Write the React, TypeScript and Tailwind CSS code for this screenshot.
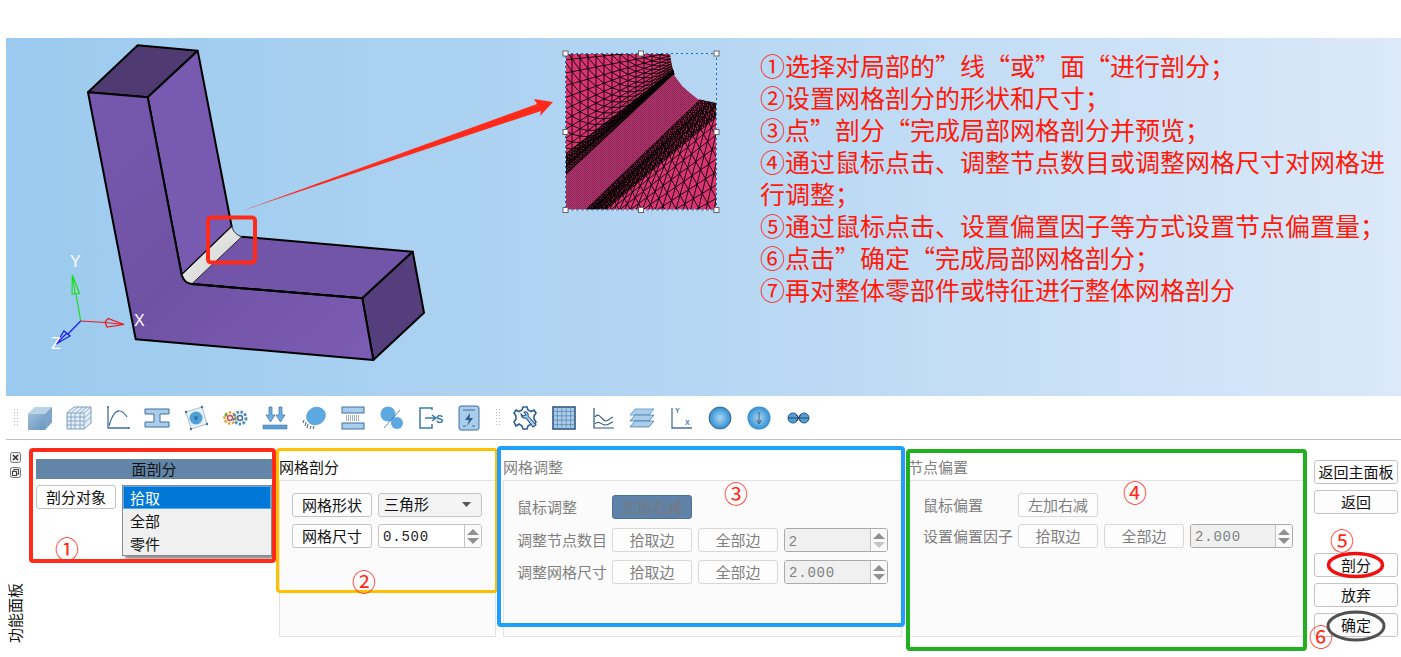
import React from "react";

const CJK = "font-['Noto_Sans_CJK_SC','Noto_Sans',sans-serif]";

type Pt = [number, number];
const lerp = (a: Pt, b: Pt, t: number): Pt => [a[0] + (b[0] - a[0]) * t, a[1] + (b[1] - a[1]) * t];

function meshPath(eA: Pt, eB: Pt, fA: Pt, fB: Pt, nS: number, nT: number, pow: number, t0 = 0, t1 = 1) {
  const P = (i: number, j: number) => {
    const s = i / nS;
    const t = t0 + (t1 - t0) * Math.pow(j / nT, pow);
    return lerp(lerp(eA, eB, s), lerp(fA, fB, s), t);
  };
  const f = (p: Pt) => `${p[0].toFixed(1)} ${p[1].toFixed(1)}`;
  let d = "";
  for (let j = 0; j <= nT; j++) {
    for (let i = 0; i < nS; i++) {
      d += `M${f(P(i, j))}L${f(P(i + 1, j))}`;
      if (j < nT) {
        d += `M${f(P(i, j))}L${f(P(i, j + 1))}`;
        d += `M${f(P(i + 1, j))}L${f(P(i, j + 1))}`;
      }
    }
  }
  return d;
}

const topMesh =
  meshPath([556, 184], [684, 65], [556, 46], [684, 46], 16, 13, 1.5, 0.06, 1) +
  meshPath([556, 184], [684, 65], [556, 46], [684, 46], 48, 7, 1.2, 0, 0.16);
const botMesh =
  meshPath([570, 224], [712, 88], [606, 292], [790, 226], 19, 14, 1.5, 0.05, 1) +
  meshPath([570, 224], [712, 88], [606, 292], [790, 226], 57, 7, 1.2, 0, 0.16);

function Handle({ x, y }: { x: number; y: number }) {
  return <rect x={x - 2.5} y={y - 2.5} width={5} height={5} fill="#fff" stroke="#666" strokeWidth={1} />;
}

function Scene() {
  const shape = "566,54 670,54 672,66 675,76 682,86 690,93 698,99 716,103 716,210 566,210";
  return (
    <svg viewBox="6 38 714 358" className="w-[714px] h-[358px] shrink-0 block">
      <defs>
        <linearGradient id="faceA" x1="0" y1="0" x2="1" y2="1">
          <stop offset="0" stopColor="#7659ae" />
          <stop offset="0.5" stopColor="#7052a4" />
          <stop offset="1" stopColor="#7c5cb4" />
        </linearGradient>
        <linearGradient id="fillet" x1="0" y1="0" x2="1" y2="1">
          <stop offset="0" stopColor="#f2f2f0" />
          <stop offset="1" stopColor="#cfcfcd" />
        </linearGradient>
        <pattern id="fine" width="2" height="2" patternUnits="userSpaceOnUse">
          <rect width="2" height="2" fill="#b2346c" />
          <rect width="1" height="1" fill="#7e2550" />
          <rect x="1" y="1" width="1" height="1" fill="#982c5e" />
        </pattern>
        <clipPath id="meshClip">
          <polygon points={shape} />
        </clipPath>
      </defs>
      <g stroke="#000" strokeWidth={2} strokeLinejoin="round">
        <polygon points="88,92.3 137.7,45.3 197.7,50.7 147.7,97.3" fill="#4f3a72" />
        <polygon points="147.7,97.3 197.7,50.7 231.7,226.7 181.7,275" fill="#785ab0" />
        <polygon points="241.7,236.7 412.7,251.7 362.3,298.3 191.7,284" fill="#7254a8" stroke="none" />
        <path d="M241.7 236.7L412.7 251.7L362.3 298.3L191.7 284" fill="none" />
        <polygon points="412.7,251.7 424,312.7 373.3,360 362.3,298.3" fill="#553e7c" />
        <polygon points="88,92.3 147.7,97.3 181.7,275 191.7,284 362.3,298.3 373.3,360 135.7,339.3" fill="url(#faceA)" />
        <path d="M231.7 226.7C233 231 237 235.5 241.7 236.7L191.7 284C186 283.5 183 279 181.7 275Z" fill="url(#fillet)" strokeWidth={0.8} />
      </g>
      <path d="M181.7 275C183 279 186 283.5 191.7 284L362.3 298.3" fill="none" stroke="#000" strokeWidth={2} />
      <rect x={208} y={217.5} width={47} height={45} rx={3} fill="none" stroke="#ff2a1a" strokeWidth={4} />
      <polygon points="243,210.5 537,104 534,99 553,102 540,116 541,111" fill="#ff2a1a" />
      {/* axes */}
      <g fill="none" strokeWidth={1.2}>
        <path d="M80.7 321L76 294" stroke="#19e019" />
        <path d="M72.3 275L79.5 293.5L72 294ZM73 277L75 294" stroke="#19e019" />
        <path d="M80.7 321L105 322.5" stroke="#f01818" />
        <path d="M124 324.5L108 318.5L105 322L107 327ZM124 324.5L105 322.5" stroke="#f01818" />
        <path d="M80.7 321L68 334" stroke="#1818f0" />
        <path d="M56 344L64 331L70 336ZM56 344L67 333" stroke="#1818f0" />
      </g>
      <text x={70} y={267} fill="#fff" fontSize={16} fontFamily="Liberation Sans">Y</text>
      <text x={134} y={326} fill="#fff" fontSize={16} fontFamily="Liberation Sans">X</text>
      <text x={51} y={349} fill="#fff" fontSize={16} fontFamily="Liberation Sans">Z</text>
      {/* mesh picture */}
      <g clipPath="url(#meshClip)">
        <polygon points={shape} fill="#dc3473" />
        <path d={topMesh} stroke="#000" strokeWidth={0.9} fill="none" />
        <path d={botMesh} stroke="#000" strokeWidth={0.9} fill="none" />
        <polygon points="566,175 673,75 698,100 585,210 566,210" fill="url(#fine)" />
      </g>
      <rect x={565.5} y={53.5} width={151} height={156.5} fill="none" stroke="#fff" />
      <rect x={565.5} y={53.5} width={151} height={156.5} fill="none" stroke="#1678d0" strokeDasharray="3 2" />
      <Handle x={565.5} y={53.5} />
      <Handle x={641} y={53.5} />
      <Handle x={716.5} y={53.5} />
      <Handle x={565.5} y={132} />
      <Handle x={716.5} y={132} />
      <Handle x={565.5} y={210} />
      <Handle x={641} y={210} />
      <Handle x={716.5} y={210} />
    </svg>
  );
}

function Grip() {
  return (
    <svg width={4} height={18} viewBox="0 0 4 18" className="shrink-0">
      {[0, 3, 6, 9, 12, 15].map((y) => (
        <g key={y} fill="#b8b8b8">
          <rect x={0} y={y} width={1} height={1} />
          <rect x={3} y={y} width={1} height={1} />
        </g>
      ))}
    </svg>
  );
}

const B = "#3f6f9f";
const L = "#6fa8d8";

function Ico({ children }: { children: React.ReactNode }) {
  return (
    <svg width={26} height={26} viewBox="0 0 26 26" className="shrink-0" fill="none">
      {children}
    </svg>
  );
}

const icons: React.ReactNode[] = [
  <Ico key="1">
    <defs>
      <linearGradient id="cube" x1="0" y1="0" x2="1" y2="1">
        <stop offset="0" stopColor="#a9c8e2" />
        <stop offset="1" stopColor="#5f8db8" />
      </linearGradient>
    </defs>
    <path d="M1 9L8 2H25V17L18 25H1Z" fill="url(#cube)" />
    <path d="M18 9L25 2V17L18 25Z" fill="#7ea6ca" />
    <path d="M1 9L8 2H25L18 9Z" fill="#b8d2e8" />
  </Ico>,
  <Ico key="2">
    <path d="M1 8L8 2H25V18L18 24H1Z" fill="#e4eef6" stroke="#7a9cbc" />
    <path d="M1 12H18M1 16H18M1 20H18M5 8V24M9 8V24M14 8V24M18 8V24M1 8H18M18 8L25 2M18 13L25 7M18 18L25 12M5 8L12 2M10 8L17 2M14 8L21 2" stroke="#7a9cbc" strokeWidth={0.8} />
  </Ico>,
  <Ico key="3">
    <path d="M3 2V23H24" stroke={B} strokeWidth={1.3} />
    <path d="M4 21C7 10 11 5 15 6C18 6.5 20 9 22 12" stroke={B} strokeWidth={1.2} />
    <circle cx={24} cy={23} r={1} fill={B} />
    <circle cx={3} cy={2} r={1} fill={B} />
  </Ico>,
  <Ico key="4">
    <path d="M1 4H25V9H16V17H25V22H1V17H10V9H1Z" fill="#a9cdea" stroke={B} strokeWidth={1} />
  </Ico>,
  <Ico key="5">
    <path d="M3 7L19 2L24 19L8 24Z" fill="#e8f0f8" stroke="#8aa4bc" strokeWidth={0.7} />
    <circle cx={13} cy={13} r={6.5} fill="#4f9fd8" />
    <circle cx={13} cy={13} r={2} fill="#2f75aa" />
    <circle cx={3} cy={7} r={1.2} fill={B} />
    <circle cx={19} cy={2} r={1.2} fill={B} />
    <circle cx={24} cy={19} r={1.2} fill={B} />
    <circle cx={8} cy={24} r={1.2} fill={B} />
  </Ico>,
  <Ico key="6">
    <circle cx={8} cy={13} r={5.5} stroke="#e8a030" strokeWidth={2.5} strokeDasharray="2.5 1.5" />
    <circle cx={8} cy={13} r={2.5} stroke="#d84848" strokeWidth={1.5} />
    <circle cx={4} cy={10} r={1.5} fill="#48b048" />
    <circle cx={18} cy={13} r={6} stroke="#4f8fc0" strokeWidth={3} strokeDasharray="2.5 1.5" />
    <circle cx={18} cy={13} r={2.5} stroke={B} strokeWidth={1.5} />
  </Ico>,
  <Ico key="7">
    <path d="M7 2H10V10H13L8.5 17L4 10H7ZM17 2H20V10H23L18.5 17L14 10H17Z" fill="#6fb0e0" stroke={B} strokeWidth={0.7} />
    <rect x={1} y={20} width={24} height={4} fill="#5aa0d8" stroke={B} strokeWidth={0.5} />
  </Ico>,
  <Ico key="8">
    <ellipse cx={15} cy={11} rx={10} ry={9} fill="#5ca8e0" transform="rotate(-30 15 11)" />
    <path d="M3 15L2 18M5 17L4 21M7 19L6 23M10 21L9 24M13 21L12 24" stroke="#4a5a6a" strokeWidth={1} />
  </Ico>,
  <Ico key="9">
    <rect x={2} y={2} width={22} height={6} fill="#a9cdea" stroke={B} />
    <rect x={2} y={18} width={22} height={6} fill="#a9cdea" stroke={B} />
    <path d="M6 11H20M6 13H20M6 15H20" stroke="#40607a" strokeWidth={1} strokeDasharray="1 1" />
  </Ico>,
  <Ico key="10">
    <circle cx={9} cy={9} r={7.5} fill="#5ca8e0" />
    <circle cx={18} cy={18} r={6} fill="#5ca8e0" />
    <path d="M5 23L21 5" stroke={B} strokeWidth={0.8} />
  </Ico>,
  <Ico key="11">
    <path d="M14 5V3H2V23H14V19" stroke="#3a7ca8" strokeWidth={1.5} />
    <path d="M7 13H17M14 10L18 13L14 16" stroke="#3a7ca8" strokeWidth={1.5} />
    <text x={18} y={18} fontSize={11} fontWeight={700} fontFamily="Liberation Sans" fill="#3a7ca8">S</text>
  </Ico>,
  <Ico key="12">
    <rect x={2} y={1} width={20} height={24} rx={2} fill="#a9cdea" stroke={B} />
    <path d="M6 5H18M6 21H9M15 21H18" stroke={B} strokeWidth={1.2} />
    <path d="M13 8L8 15H12L10 21L16 13H12.5Z" fill="#2f5f86" />
  </Ico>,
];

const icons2: React.ReactNode[] = [
  <Ico key="a">
    <path d="M11 2H15L16 5L19 6.5L22 5L24 8L22 11V14L24 17L22 21L19 19L16 21L15 24H11L10 21L7 19L4 21L2 17L4 14V11L2 8L4 5L7 6.5L10 5Z" fill="none" stroke="#2f5f8f" strokeWidth={1.6} />
    <path d="M9 9C9 12 12 14 14 13L21 22L24 20L16 11C17 9 15 6 12 7L14 10L11 11Z" fill="#a9cdea" stroke="#2f5f8f" strokeWidth={1.1} />
  </Ico>,
  <Ico key="b">
    <rect x={2} y={2} width={22} height={22} fill="#a9cdea" stroke="#2f5580" strokeWidth={1.6} />
    <path d="M6.4 2V24M10.8 2V24M15.2 2V24M19.6 2V24M2 6.4H24M2 10.8H24M2 15.2H24M2 19.6H24" stroke="#5f86ae" strokeWidth={0.8} />
  </Ico>,
  <Ico key="c">
    <path d="M4 3V23H24" stroke="#2f5580" strokeWidth={1.2} />
    <path d="M5 12C9 6 12 16 16 16C19 16 21 12 23 12M5 19C9 14 12 21 16 20C19 20 21 17 23 17" stroke="#2f5580" strokeWidth={1.1} />
  </Ico>,
  <Ico key="d">
    <path d="M6 4H25L20 10H1Z" fill="#a9cdea" stroke={L} />
    <path d="M6 10H25L20 16H1Z" fill="#a9cdea" stroke={B} strokeWidth={0.7} />
    <path d="M6 16H25L20 22H1Z" fill="#a9cdea" stroke={B} strokeWidth={0.7} />
  </Ico>,
  <Ico key="e">
    <path d="M4 3V23H24" stroke="#4a6f9a" strokeWidth={1.3} />
    <text x={7} y={8} fontSize={7} fontWeight={700} fontFamily="Liberation Sans" fill="#3f80b8">Y</text>
    <text x={17} y={20} fontSize={7} fontWeight={700} fontFamily="Liberation Sans" fill="#3f80b8">X</text>
  </Ico>,
  <Ico key="f">
    <defs>
      <radialGradient id="sph">
        <stop offset="0" stopColor="#a9d4f2" />
        <stop offset="1" stopColor="#2f8fd0" />
      </radialGradient>
    </defs>
    <circle cx={13} cy={13} r={11} fill="url(#sph)" stroke="#2f5580" strokeWidth={0.8} />
  </Ico>,
  <Ico key="g">
    <circle cx={13} cy={13} r={11.5} fill="url(#sph)" />
    <path d="M13 7V18M11 15L13 19L15 15" stroke="#3f6080" strokeWidth={1} />
  </Ico>,
  <Ico key="h">
    <circle cx={8} cy={13} r={5} fill="#4f9fd8" stroke="#2f5580" />
    <circle cx={19} cy={13} r={5} fill="#4f9fd8" stroke="#2f5580" />
    <path d="M3 13H24M11 10L14 13L11 16M16 10L13 13L16 16" stroke="#2f4560" strokeWidth={1} />
  </Ico>,
];

function Btn({
  children,
  w = "w-[80px]",
  off = false,
  active = false,
}: {
  children: React.ReactNode;
  w?: string;
  off?: boolean;
  active?: boolean;
}) {
  const tone = active
    ? "bg-[#5f82a8] border-[#4f7298] text-[#78787c]"
    : off
      ? "bg-[#fdfdfd] border-[#d8d8d8] text-[#808080]"
      : "bg-[#fdfdfd] border-[#c4c4c4] text-[#111]";
  return (
    <div className={`${w} h-[24px] ${tone} shrink-0 border rounded-[3px] flex items-center justify-center pb-[2px] text-[15px] leading-none`}>
      {children}
    </div>
  );
}

function Arrow({ down = false, light = false }: { down?: boolean; light?: boolean }) {
  return (
    <svg width={12} height={6} viewBox="0 0 12 6" className="block">
      <path d={down ? "M0 0H12L6 6Z" : "M0 6H12L6 0Z"} fill={light ? "#c6c6c6" : "#909090"} />
    </svg>
  );
}

function Spin({ value, off = false, mono = true, downLight = false }: { value: string; off?: boolean; mono?: boolean; downLight?: boolean }) {
  return (
    <div className={`h-[24px] flex-1 min-w-0 flex rounded-[3px] border ${off ? "border-[#ababab]" : "border-[#c4c4c4]"} bg-white overflow-hidden`}>
      <div className={`flex-1 flex items-center pl-[4px] pt-[2px] text-[14px] ${off ? "bg-[#f0f0f0] text-[#808080]" : "text-[#222]"} ${mono ? "font-['Liberation_Mono',monospace] tracking-[0.8px]" : "font-['Liberation_Sans',sans-serif]"}`}>
        {value}
      </div>
      <div className="w-[17px] border-l border-[#c4c4c4] flex flex-col items-center justify-center gap-[3px] bg-[#fafafa]">
        <Arrow />
        <Arrow down light={downLight} />
      </div>
    </div>
  );
}

function Group({ title, off = true, width, children }: { title: string; off?: boolean; width: string; children: React.ReactNode }) {
  return (
    <div className={`${width} shrink-0 flex flex-col`}>
      <div className={`h-[40px] pt-[17px] leading-[20px] text-[15px] ${off ? "text-[#808080]" : "text-[#111]"}`}>{title}</div>
      <div className="h-[157px] border border-[#e2e2e2] bg-[#fbfbfb]">{children}</div>
    </div>
  );
}

function Row({ children, className = "" }: { children: React.ReactNode; className?: string }) {
  return <div className={`flex items-center gap-[6px] ${className}`}>{children}</div>;
}

function Label({ children }: { children: React.ReactNode }) {
  return <div className="w-[95px] shrink-0 whitespace-nowrap text-[15px] text-[#808080] leading-none pb-[2px] -mr-[6px]">{children}</div>;
}

function Panel() {
  return (
    <div className={`relative flex-1 flex ${CJK}`}>
      <div className="w-[36px] shrink-0 flex flex-col items-start pl-[10px] pt-[12px]">
        <svg width={11} height={11} viewBox="0 0 11 11">
          <rect x={0.5} y={0.5} width={10} height={10} rx={2} fill="#eee" stroke="#777" />
          <path d="M3 3L8 8M8 3L3 8" stroke="#333" strokeWidth={1.6} />
        </svg>
        <svg width={11} height={11} viewBox="0 0 11 11" className="mt-[4px]">
          <rect x={0.5} y={0.5} width={10} height={10} rx={2} fill="#eee" stroke="#777" />
          <rect x={4} y={2.5} width={4.5} height={4.5} fill="none" stroke="#444" />
          <rect x={2.5} y={4.5} width={4} height={4} fill="#eee" stroke="#444" />
        </svg>
        <div className="mt-[105px] -ml-[3px] [writing-mode:vertical-rl] [text-orientation:sideways] rotate-180 text-[15px] leading-[15px] text-[#111] whitespace-nowrap">功能面板</div>
      </div>

      <div className="w-[236px] shrink-0 pt-[19px] flex flex-col">
        <div className="h-[20px] bg-[#6285a8] text-[#111] text-[15px] leading-[20px] text-center">面剖分</div>
        <div className="relative flex gap-[6px] mt-[6px]">
          <Btn>剖分对象</Btn>
          <div className="relative w-[150px] h-[24px]">
            <div className="absolute left-0 top-0 w-[150px] h-[71px] bg-[#f0f0f0] border border-[#8a8a8a] shadow-[3px_3px_3px_rgba(0,0,0,0.45)] text-[15px] text-[#111] leading-[23px]">
              <div className="h-[23px] bg-[#0078d7] border border-[#58aaf0] text-white pl-[6px] leading-[21px]">拾取</div>
              <div className="h-[23px] pl-[7px]">全部</div>
              <div className="h-[23px] pl-[7px]">零件</div>
            </div>
          </div>
        </div>
      </div>

      <div className="w-[7px] shrink-0" />
      <Group title="网格剖分" off={false} width="w-[217px]">
        <div className="pt-[12px] pl-[12px] pr-[13px] flex flex-col gap-[7px]">
          <Row>
            <Btn>网格形状</Btn>
            <div className="h-[24px] flex-1 border border-[#c4c4c4] rounded-[3px] bg-[#f4f4f4] flex items-center justify-between pl-[5px] pr-[10px] pb-[2px] text-[15px] text-[#111]">
              三角形
              <svg width={9} height={5} viewBox="0 0 9 5"><path d="M0 0H9L4.5 5Z" fill="#555" /></svg>
            </div>
          </Row>
          <Row>
            <Btn>网格尺寸</Btn>
            <Spin value="0.500" />
          </Row>
        </div>
      </Group>

      <div className="w-[7px] shrink-0" />
      <Group title="网格调整" width="w-[399px]">
        <div className="pt-[14px] pl-[13px] pr-[13px] flex flex-col gap-[8px]">
          <Row className="mb-[1px]"><Label>鼠标调整</Label><Btn active>左加右减</Btn></Row>
          <Row><Label>调整节点数目</Label><Btn off>拾取边</Btn><Btn off>全部边</Btn><Spin value="2" off mono={false} downLight /></Row>
          <Row><Label>调整网格尺寸</Label><Btn off>拾取边</Btn><Btn off>全部边</Btn><Spin value="2.000" off /></Row>
        </div>
      </Group>

      <div className="w-[6px] shrink-0" />
      <Group title="节点偏置" width="w-[398px]">
        <div className="pt-[12px] pl-[14px] pr-[12px] flex flex-col gap-[7px]">
          <Row><Label>鼠标偏置</Label><Btn off>左加右减</Btn></Row>
          <Row><Label>设置偏置因子</Label><Btn off>拾取边</Btn><Btn off>全部边</Btn><Spin value="2.000" off /></Row>
        </div>
      </Group>

      <div className="w-[84px] ml-[8px] shrink-0 pt-[20px] flex flex-col gap-[6px]">
        <Btn w="w-full">返回主面板</Btn>
        <Btn w="w-full">返回</Btn>
        <div className="h-[27px]" />
        <Btn w="w-full">剖分</Btn>
        <Btn w="w-full">放弃</Btn>
        <Btn w="w-full">确定</Btn>
      </div>

      {/* annotations drawn over the panel */}
      <div className="absolute left-[29px] top-[8px] w-[247px] h-[115px] border-[4px] border-[#ff2a1a] rounded-[4px]" />
      <div className="absolute left-[276px] top-[8px] w-[222px] h-[145px] border-[3px] border-[#ffc000] rounded-[4px]" />
      <div className="absolute left-[497px] top-[6px] w-[408px] h-[181px] border-[4px] border-[#1e9fff] rounded-[4px]" />
      <div className="absolute left-[906px] top-[9px] w-[401px] h-[202px] border-[4px] border-[#20b020] rounded-[4px]" />
      <span className="absolute left-[55px] top-[91px] text-[24px] leading-[34px] text-[#ff2a1a]">①</span>
      <span className="absolute left-[352px] top-[124px] text-[24px] leading-[34px] text-[#ff2a1a]">②</span>
      <span className="absolute left-[724px] top-[36px] text-[24px] leading-[34px] text-[#ff2a1a]">③</span>
      <span className="absolute left-[1123px] top-[35px] text-[24px] leading-[34px] text-[#ff2a1a]">④</span>
      <span className="absolute left-[1330px] top-[83px] text-[24px] leading-[34px] text-[#ff2a1a]">⑤</span>
      <span className="absolute left-[1309px] top-[179px] text-[24px] leading-[34px] text-[#ff2a1a]">⑥</span>
      <svg className="absolute left-[1320px] top-[105px] pointer-events-none" width={72} height={100} viewBox="0 0 72 100" fill="none">
        <ellipse cx={35.5} cy={20} rx={27} ry={11.5} stroke="#f01010" strokeWidth={3.5} />
        <ellipse cx={36} cy={81} rx={28} ry={14} stroke="#505050" strokeWidth={3} />
      </svg>
    </div>
  );
}

export default function App() {
  return (
    <div className={`w-[1401px] h-[657px] bg-white overflow-hidden flex flex-col ${CJK}`}>
      <div className="h-[38px] shrink-0" />
      <div className="h-[358px] ml-[6px] shrink-0 flex bg-gradient-to-r from-[#9bcaee] via-[#b5d6f3] to-[#dbe9f9]">
        <Scene />
        <div className="pl-[40px] pt-[11px] w-[672px] text-[25px] leading-[32px] text-[#ff1a0a] [text-spacing-trim:space-all]">
          <div>①选择对局部的”线“或”面“进行剖分；</div>
          <div>②设置网格剖分的形状和尺寸；</div>
          <div>③点”剖分“完成局部网格剖分并预览；</div>
          <div>④通过鼠标点击、调整节点数目或调整网格尺寸对网格进行调整；</div>
          <div>⑤通过鼠标点击、设置偏置因子等方式设置节点偏置量；</div>
          <div>⑥点击”确定“完成局部网格剖分；</div>
          <div>⑦再对整体零部件或特征进行整体网格剖分</div>
        </div>
      </div>
      <div className="h-[44px] shrink-0 ml-[6px] border-b border-[#c0c0c0] flex items-center pl-[8px]">
        <Grip />
        <div className="flex gap-[13.1px] ml-[9px]">{icons}</div>
        <div className="ml-[13px]"><Grip /></div>
        <div className="flex gap-[13px] ml-[12px]">{icons2}</div>
      </div>
      <Panel />
    </div>
  );
}
